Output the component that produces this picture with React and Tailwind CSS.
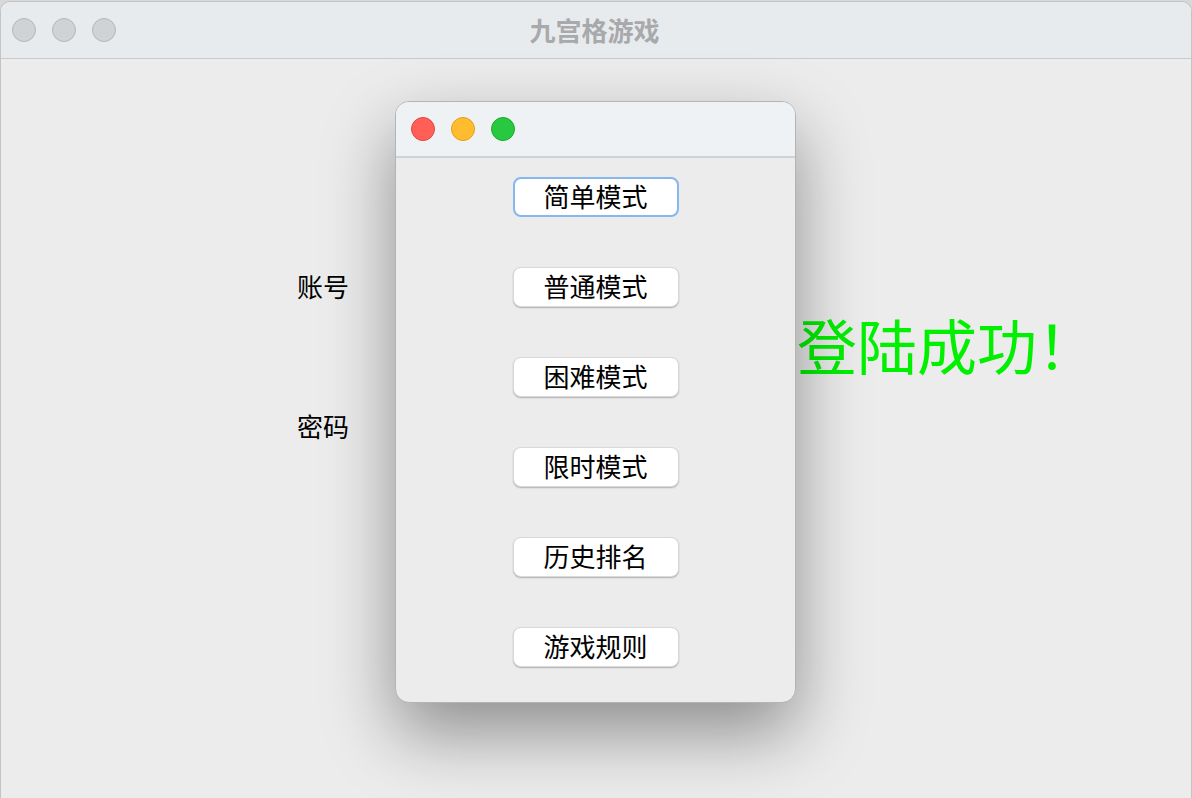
import React from "react";

const font = { fontFamily: '"Noto Sans CJK SC", "Noto Sans", sans-serif' };

const modes = ["简单模式", "普通模式", "困难模式", "限时模式", "历史排名", "游戏规则"];

const Light = ({ color }) => (
  <span className={`block w-[24px] h-[24px] rounded-full border ${color}`}></span>
);

const MenuDialog = () => {
  return (
    <div className="absolute left-[394px] top-[99px] w-[401px] h-[602px] rounded-[14px] border border-[#b4b4b4] bg-[#ececec] overflow-hidden shadow-[0_30px_70px_rgba(0,0,0,0.4)]">
      <div className="h-[56px] bg-[#eff2f5] border-b-2 border-[#cfd2d5] flex items-center gap-[16px] pl-[15px] pb-[1px]">
        <Light color="bg-[#ff5f57] border-[#e2463f]" />
        <Light color="bg-[#febc2e] border-[#e1a116]" />
        <Light color="bg-[#28c840] border-[#1aab29]" />
      </div>
      <div className="flex flex-col items-center gap-[50px] pt-[19px]">
        {modes.map((m, i) => (
          <button
            key={m}
            className={`w-[166px] h-[40px] rounded-[8px] bg-white text-[26px] leading-none text-black flex items-center justify-center pb-[3px] ${
              i === 0
                ? "border-[2.5px] border-[#86b7ee]"
                : "border border-[#d9d9d9] shadow-[0_1px_1.5px_rgba(0,0,0,0.25)]"
            }`}
            style={font}
          >
            {m}
          </button>
        ))}
      </div>
    </div>
  );
};

export default function App() {
  return (
    <div className="w-[1192px] h-[798px] bg-[#d8d8d8] overflow-hidden" style={font}>
      <div className="relative w-full h-[798px] mt-[1px] rounded-t-[10px] border-t border-x border-[#c4c4c4] bg-[#ececec] overflow-hidden">
        <div className="h-[57px] bg-[#e8ebee] border-b border-[#c8cacc] relative flex items-center">
          <div className="flex gap-[16px] pl-[11px]">
            <Light color="bg-[#d0d3d6] border-[#b5b8bb]" />
            <Light color="bg-[#d0d3d6] border-[#b5b8bb]" />
            <Light color="bg-[#d0d3d6] border-[#b5b8bb]" />
          </div>
          <div className="flex-1 text-center text-[26px] font-bold text-[#a8a9aa] pr-[2px] -ml-[116px] pb-[1px]">
            九宫格游戏
          </div>
        </div>

        <div className="flex items-start pl-[296px]">
          <div className="flex flex-col gap-[110px] pt-[212px]">
            <span className="text-[26px] leading-[30px] text-black">账号</span>
            <span className="text-[26px] leading-[30px] text-black">密码</span>
          </div>
          <div className="ml-[448px] pt-[250px] text-[60px] leading-[70px] text-[#00f000]">
            登陆成功！
          </div>
        </div>

        <MenuDialog />
      </div>
    </div>
  );
}
